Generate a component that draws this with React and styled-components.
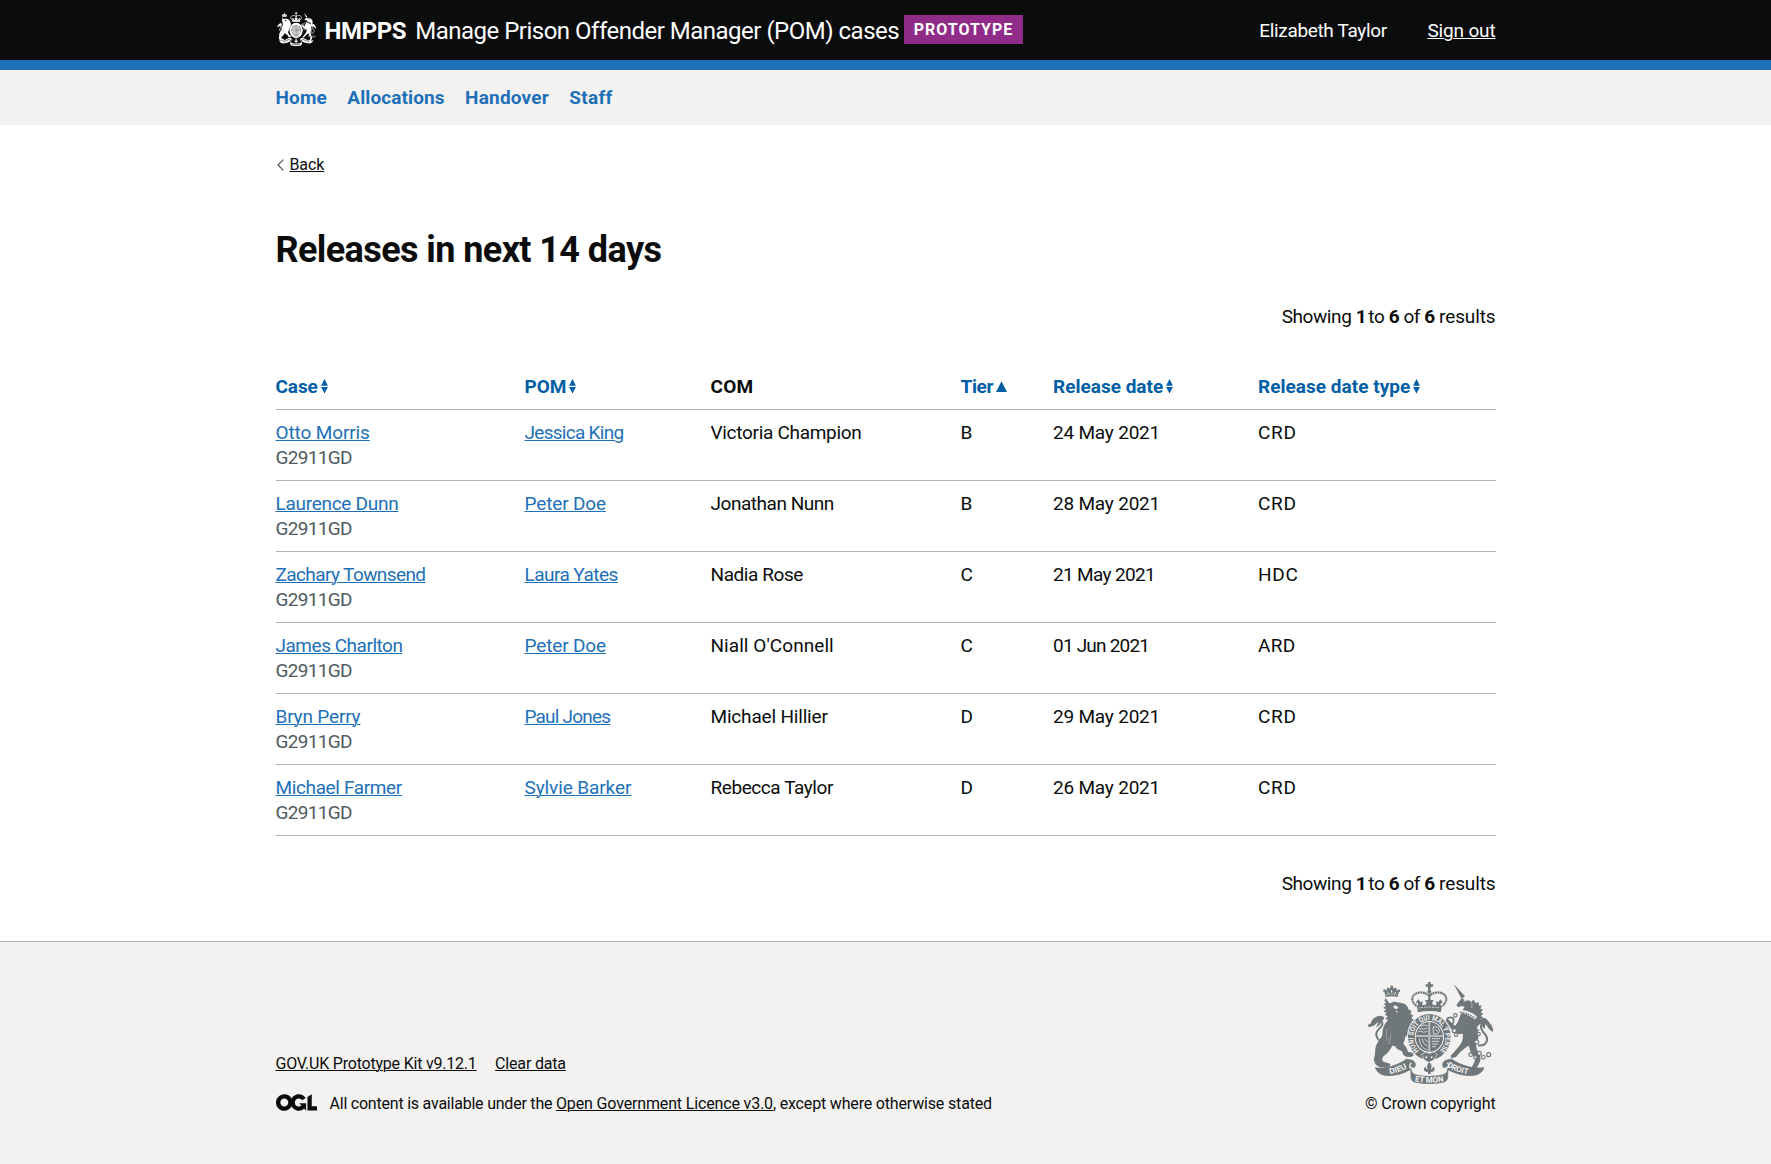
import React from "react";
import styled, { createGlobalStyle } from "styled-components";

const INK = "#0b0c0c";
const LINK = "#1d70b8";
const SORT = "#005ea5";
const PALE = "#f3f2f1";
const RULE = "#b1b4b6";

const GlobalStyle = createGlobalStyle`
  *, *::before, *::after { box-sizing: border-box; }
  body {
    margin: 0;
    background: #fff;
    color: ${INK};
    font-family: Roboto, "Liberation Sans", Arial, sans-serif;
    font-size: 19px;
    line-height: 25px;
  }
`;

const Container = styled.div`
  width: 1220px;
  margin: 0 auto;
`;

const Tracked = styled.span`
  letter-spacing: ${(p) => p.$t || 0}px;
  white-space: nowrap;
`;

const Anchor = styled.a`
  color: ${(p) => p.$color || LINK};
  letter-spacing: ${(p) => p.$t || 0}px;
  text-decoration: underline;
  text-decoration-thickness: 1px;
  text-underline-offset: ${(p) => p.$offset || 1}px;
  white-space: nowrap;
  cursor: pointer;
`;

/* Header */

const Header = styled.header`
  height: 70px;
  background: ${INK};
  border-bottom: 10px solid ${LINK};
  color: #fff;
`;

const HeaderRow = styled(Container)`
  display: flex;
  justify-content: space-between;
  align-items: flex-start;
`;

const Brand = styled.div`
  display: flex;
  align-items: flex-start;
  padding-left: 1.5px;
`;

const BrandCrest = styled.div`
  height: 34px;
  margin: 12px 8.5px 0 0;
  svg { display: block; }
`;

const Organisation = styled.span`
  margin: 16px 9px 0 0;
  font-size: 24px;
  font-weight: 700;
  line-height: 30px;
  letter-spacing: -0.4px;
`;

const Product = styled.span`
  margin-top: 16px;
  font-size: 24px;
  line-height: 30px;
  letter-spacing: -0.5px;
  white-space: nowrap;
`;

const Tag = styled.strong`
  height: 29px;
  margin: 15px 0 0 4.5px;
  padding: 5px 10px 0 10px;
  background: #912b88;
  font-size: 16px;
  line-height: 19px;
  letter-spacing: 1px;
`;

const Account = styled.div`
  display: flex;
  gap: 40.5px;
  padding-top: 18px;
`;

/* Navigation */

const Nav = styled.nav`
  background: ${PALE};
`;

const NavList = styled(Container)`
  display: flex;
  gap: 20.4px;
  padding: 15px 0;
`;

const NavLink = styled.a`
  color: ${LINK};
  font-weight: 700;
  letter-spacing: ${(p) => p.$t}px;
`;

/* Main content */

const Main = styled(Container)`
  padding: 30px 0 45px;
`;

const BackLink = styled.div`
  display: flex;
  align-items: center;
  gap: 6px;
  height: 20px;
  padding-left: 1px;
  font-size: 16px;
  line-height: 20px;
`;

const Title = styled.h1`
  margin: 55px 0 34px;
  font-size: 36px;
  font-weight: 700;
  line-height: 40px;
  letter-spacing: -0.59px;
`;

const Results = styled.p`
  margin: 0;
  text-align: right;
  letter-spacing: -0.42px;
`;

const Narrow = styled.b`
  letter-spacing: -2.6px;
`;

const Table = styled.table`
  width: 1220px;
  margin: 35px 0;
  table-layout: fixed;
  border-collapse: separate;
  border-spacing: 0;
`;

const Col = styled.col`
  width: ${(p) => p.$w}px;
`;

const Th = styled.th`
  height: 46px;
  padding: 10px 0;
  border-bottom: 1px solid ${RULE};
  color: ${(p) => (p.$sortable ? SORT : INK)};
  text-align: left;
  vertical-align: top;
  white-space: nowrap;
`;

const HeadCell = styled.div`
  display: flex;
  align-items: flex-start;
  letter-spacing: ${(p) => p.$t || 0}px;
`;

const Td = styled.td`
  height: 71px;
  padding: 10px 0;
  border-bottom: 1px solid ${RULE};
  vertical-align: top;
`;

const CaseNumber = styled.div`
  color: #505a5f;
  letter-spacing: -0.7px;
`;

const SortIcon = styled.svg`
  display: block;
  margin: 5px 0 0 3px;
  fill: currentColor;
`;

/* Footer */

const Footer = styled.footer`
  padding: 40px 0 50px;
  border-top: 1px solid ${RULE};
  background: ${PALE};
  font-size: 16px;
  line-height: 20px;
`;

const FooterRow = styled(Container)`
  display: flex;
  justify-content: space-between;
  align-items: flex-end;
`;

const FooterLinks = styled.div`
  display: flex;
  gap: 18.5px;
  margin-bottom: 20px;
`;

const Licence = styled.div`
  display: flex;
  align-items: flex-start;
  height: 20px;
  svg { display: block; margin-right: 13px; }
`;

const Copyright = styled.div`
  display: flex;
  flex-direction: column;
  align-items: center;
  gap: 10px;
  svg { display: block; }
`;

function Crest({ width, height, ink, ground, detailed }) {
  return (
    <svg width={width} height={height} viewBox="54 36 375 306" preserveAspectRatio="none" fill={ink} aria-hidden="true">
      {/* crown */}
      <path d="M234 36h8v7h7v7h-7v9h-8v-9h-7v-7h7z" />
      <circle cx="238" cy="65" r="6" />
      <g fill="none" stroke={ink} strokeWidth="6.5" strokeDasharray={detailed ? "6 1.4" : undefined}>
        <path d="M200 108C180 94 184 72 206 68c14-2 26 2 32 12 6-10 18-14 32-12 22 4 26 26 6 40" />
        <path d="M238 72v18" />
      </g>
      <path d="M205 88l6 8 8-2-3 9 5 7h-19l3-8-7-5zM238 82l5 8 9 1-6 7 6 12h-28l6-12-6-7 9-1zM271 88l-6 8-8-2 3 9-5 7h19l-3-8 7-5z" />
      <path d="M200 108q38-8 76 0l-4 19q-34-8-68 0z" />
      <path d="M206 114q32-6 64 0" fill="none" stroke={ground} strokeWidth="2.5" strokeDasharray="5 3" />

      {/* lion */}
      <path d="M107 84l-4 9 6 4-8 5 7 5-9 7 9 3-7 9 9 1-5 9 8 2-6 9 7 3c-12 12-18 28-17 45-4 12-14 20-19 32-4 10-1 20-4 30-4 12-2 24 8 30l9 5 14-1 12-1 5-8-9-3-12-4c-8-6-4-14 4-20 10-8 17-18 22-28l9 2c2 8 12 12 20 14 1 8 6 16 13 17l12 1 10-4-3-9-13-2c-4-8-7-18-15-24 4-10 6-18 7-26l12 10 9 9 9-4 2-10-9-3-10-14 8 3-6-10 9 0-8-10 9-3-8-8 9-6-9-5 6-9-9-4 4-9-10-5c-1-10-10-18-21-19-12-6-28-4-36 1z" />
      <g fill={ground}>
        <path d="M114 94l10-3 6 4-8 3zM137 94l9-4 6 5-8 3zM130 108l6-2 10 7-8 5-6-4zM137 122l6 1-2 6z" />
      </g>
      <path d="M107 81l-4-17 9-4 5-3 8-6 8 6 5 3 9 4-4 17q-18-5-36 0z" />
      <g>
        <circle cx="104" cy="62" r="4.5" /><circle cx="114" cy="57" r="4" /><circle cx="125" cy="51" r="4.5" /><circle cx="136" cy="57" r="4" /><circle cx="146" cy="62" r="4.5" />
        <path d="M108 75q17-5 34 0" fill="none" stroke={ground} strokeWidth="2.2" strokeDasharray="5 3" />
        <path d="M112 66l5 5M138 66l-5 5M125 60v8" fill="none" stroke={ground} strokeWidth="3" />
      </g>
      <path d="M100 218C80 210 72 192 86 178c12-10 16-20 4-28" fill="none" stroke={ink} strokeWidth="6" />
      <path d="M104 144c-6-8-18-8-26-3-10 5-14 12-15 19l-9 4 2 8c12-2 20-6 24-12l6-4-8 16c8-4 14-8 15-15z" />
      <path d="M110 176q-4 22 4 38M122 190q2 18-6 32" fill="none" stroke={ground} strokeWidth="1" />

      {/* unicorn */}
      <path d="M311 42l34 37-10 8z" />
      <path d="M336 85c-6 4-8 10-14 16-4 5-2 9 4 10l10-3 8 3c-8 10-12 22-16 34-4 10-8 18-12 22-10-6-14-12-20-18l-10 2-4 8 8 2 14 16 10 12c8 4 16 4 24 2 2 16-2 26-8 34l-18 22-10 10 2 8 14-4c10-14 24-26 38-34 4 10 4 22 14 30 8 10 4 18 0 26l-8 14-16 6-2 7 24-2 14-18c8-12 12-22 8-32-6-12-10-18-12-32 6-14 10-24 4-36-2-12-2-20 6-30l8-6-6-4 10-8-8-3 8-9-8-2 7-10-8-1 4-11-8 1-1-11-9 4-6-11-7 6c-4-4-10-4-16-2z" />
      <path d="M328 129c16 0 32 8 48 20l5-9c-12-12-30-19-48-20z" fill={ground} />
      <path d="M330 127c16 0 32 8 47 18" fill="none" stroke={ink} strokeWidth="4.5" strokeDasharray="5 3" />
      <circle cx="343" cy="93" r="2.4" fill={ground} />
      <path d="M362 94q7 9 3 20" fill="none" stroke={ground} strokeWidth="1.5" />
      <path d="M384 226c24 4 34-16 22-32-12-14-18-24-8-36" fill="none" stroke={ink} strokeWidth="6" />
      <path d="M384 168c0-12 6-22 18-24 10 2 12 10 20 18 4 6 8 12 7 24-8-4-14-10-18-18l-4-6-4 14c-6-2-8-10-7-16-6 2-8 4-12 8z" />
      <path d="M298 160c-10-6-10-18 4-18 12 0 10 12 6 20M386 178l-10 12 2 14" fill="none" stroke={ink} strokeWidth="5" />
      <g fill={ground} stroke={ink} strokeWidth="3.4">
        <circle cx="316" cy="136" r="5" /><circle cx="313" cy="182" r="6" /><circle cx="318" cy="194" r="5" />
        <circle cx="386" cy="192" r="5" /><circle cx="380" cy="216" r="6" /><circle cx="362" cy="254" r="5.5" />
        <circle cx="376" cy="262" r="5" /><circle cx="388" cy="250" r="6" /><circle cx="400" cy="262" r="5.5" /><circle cx="416" cy="254" r="6" />
      </g>

      {/* garter and shield */}
      <ellipse cx="238" cy="201" rx="67" ry="72" fill={ground} />
      <ellipse cx="238" cy="201" rx="64" ry="69" />
      <ellipse cx="238" cy="201" rx="44" ry="48" fill={ground} />
      <ellipse cx="238" cy="201" rx="41" ry="45" />
      <path d="M238 157v88M198 198h80" stroke={ground} strokeWidth="5" />
      <g fill="none" stroke={ground} strokeWidth="2.4">
        <path d="M206 178l8-4 6 4 12-4M204 186l8-3 8 4 12-3M212 168l10-3 10 2" />
        <path d="M250 170l14 2 5 12-8 8h-10l-2-12zM254 178l10 6" />
        <path d="M208 206c2 18 8 28 24 34M216 206q2 16 16 22M224 206l8 10" />
        <path d="M246 206l24 0M246 214l22 0M246 222l18 0M246 230l12 0" />
      </g>
      <path d="M238 157v88M198 198h80" stroke={ink} strokeWidth="1.5" />
      <path id="garter" d="M207 242A48 52 0 1 1 269 242" fill="none" />
      {detailed && (
        <text fill={ground} fontSize="22" fontWeight="700" fontFamily="Roboto, sans-serif">
          <textPath href="#garter" textLength="246" lengthAdjust="spacingAndGlyphs">HONI SOIT QUI MAL Y PENSE</textPath>
        </text>
      )}
      <path d="M214 254l14-8 10 5 14-6 10 8-12 18-14 6-12-6z" stroke={ground} strokeWidth="2" />
      <g fill={ground}><circle cx="229" cy="262" r="3" /><circle cx="245" cy="262" r="3" /></g>

      {/* fleur-de-lis above the centre of the motto */}
      <path d="M238 276c8 8 8 16 4 22 4 0 7-3 6-8 8 2 8 12 0 15l-6 1v6h-8v-6l-6-1c-8-3-8-13 0-15-1 5 2 8 6 8-4-6-4-14 4-22z" />

      {/* motto scroll */}
      <g stroke={ink} strokeWidth="2">
        <path d="M76 293c32 4 66-6 94-26l17 4c10 6 12 14 6 22l-14-4c-4 0-2 6 2 10-28 16-62 22-84 15-10-4-18-12-21-21z" />
        <path d="M402 293c-34 4-68-6-98-26l-17 4c-10 6-12 14-6 22l14-4c4 0 2 6-2 10 30 16 66 22 88 15 10-4 18-12 21-21z" />
        <path d="M182 290c0 12 4 20 14 24q42 10 84 0c10-4 14-12 14-24l-1 33c-1 8-6 12-13 14q-42 9-84 0c-8-2-12-6-13-14z" />
      </g>
      <path d="M184 278c-6 6-6 12 0 16M292 278c6 6 6 12 0 16" fill="none" stroke={ground} strokeWidth="4" />
      {!detailed && (
        <g fill="none" stroke={ground} strokeWidth="5">
          <path d="M112 302q36-4 62-22M302 280q30 18 60 22M200 326q38 7 76 0" />
        </g>
      )}
      <path id="dieu" d="M119 312q34-4 62-25" fill="none" />
      <path id="droit" d="M290 289q32 21 72 25" fill="none" />
      <path id="etmon" d="M194 334q44 8 90 0" fill="none" />
      {detailed && (
        <g fill={ground} fontSize="24" fontWeight="700" fontFamily="Roboto, sans-serif">
          <text><textPath href="#dieu" textLength="56" lengthAdjust="spacingAndGlyphs">DIEU</textPath></text>
          <text><textPath href="#etmon" textLength="88" lengthAdjust="spacingAndGlyphs">ET MON</textPath></text>
          <text><textPath href="#droit" textLength="68" lengthAdjust="spacingAndGlyphs">DROIT</textPath></text>
        </g>
      )}
    </svg>
  );
}

function OglLogo() {
  return (
    <svg width="41" height="17" viewBox="0 0 483.2 195.7" fill={INK} aria-hidden="true">
      <path d="M421.5 142.8V.1l-50.7 32.3v161.1h112.4v-50.7zm-122.3-9.6A47.12 47.12 0 0 1 221 97.8c0-26 21.1-47.1 47.1-47.1 16.7 0 31.4 8.7 39.7 21.8l42.7-27.2A97.63 97.63 0 0 0 268.1 0c-36.5 0-68.3 20.1-85.1 49.7A98 98 0 0 0 97.8 0C43.9 0 0 43.9 0 97.8s43.9 97.8 97.8 97.8c36.5 0 68.3-20.1 85.1-49.7a97.76 97.76 0 0 0 149.6 25.4l19.4 22.2h3v-87.8h-80l24.3 27.5zM97.8 145c-26 0-47.1-21.1-47.1-47.1s21.1-47.1 47.1-47.1 47.1 21.1 47.1 47.1S123.8 145 97.8 145" />
    </svg>
  );
}

function SortArrow({ kind }) {
  if (kind === "ascending") {
    return (
      <SortIcon width="11" height="14" viewBox="0 0 11 14">
        <path d="M5.5 2.2L11 13H0z" />
      </SortIcon>
    );
  }
  return (
    <SortIcon width="7" height="15" viewBox="0 0 7 15">
      <path d="M3.5 0L6.9 6.7H.1zM3.5 14.6L.1 7.9h6.8z" />
    </SortIcon>
  );
}

const columns = [
  { label: "Case", width: 249, sort: "both", t: -0.1 },
  { label: "POM", width: 186, sort: "both", t: 0 },
  { label: "COM", width: 250, t: 0.2 },
  { label: "Tier", width: 92.5, sort: "ascending", t: -0.35 },
  { label: "Release date", width: 205, sort: "both", t: 0 },
  { label: "Release date type", width: 237.5, sort: "both", t: 0.03 },
];

const rows = [
  [["Otto Morris", -0.12], ["Jessica King", -0.71], ["Victoria Champion", -0.3], "B", ["24 May 2021", -0.2], ["CRD", 0.7]],
  [["Laurence Dunn", -0.28], ["Peter Doe", -0.15], ["Jonathan Nunn", -0.46], "B", ["28 May 2021", -0.2], ["CRD", 0.7]],
  [["Zachary Townsend", -0.6], ["Laura Yates", -0.55], ["Nadia Rose", -0.42], "C", ["21 May 2021", -0.65], ["HDC", 0.7]],
  [["James Charlton", -0.48], ["Peter Doe", -0.15], ["Niall O'Connell", 0.06], "C", ["01 Jun 2021", -0.8], ["ARD", 0.3]],
  [["Bryn Perry", -0.17], ["Paul Jones", -0.8], ["Michael Hillier", -0.18], "D", ["29 May 2021", -0.2], ["CRD", 0.7]],
  [["Michael Farmer", -0.37], ["Sylvie Barker", -0.1], ["Rebecca Taylor", -0.43], "D", ["26 May 2021", -0.2], ["CRD", 0.7]],
];

function ResultCount() {
  return (
    <Results>
      Showing <Narrow>1</Narrow> to <b>6</b> of <b>6</b> <Tracked $t={-0.12}>results</Tracked>
    </Results>
  );
}

export default function App() {
  return (
    <>
      <GlobalStyle />
      <Header>
        <HeaderRow>
          <Brand>
            <BrandCrest>
              <Crest width={39} height={34} ink="#fff" ground={INK} />
            </BrandCrest>
            <Organisation>HMPPS</Organisation>
            <Product>Manage Prison Offender Manager (POM) cases</Product>
            <Tag>PROTOTYPE</Tag>
          </Brand>
          <Account>
            <Tracked $t={-0.33}>Elizabeth Taylor</Tracked>
            <Anchor $color="#fff" $t={-0.15}>Sign out</Anchor>
          </Account>
        </HeaderRow>
      </Header>
      <Nav>
        <NavList>
          <NavLink $t={0.15}>Home</NavLink>
          <NavLink $t={0.1}>Allocations</NavLink>
          <NavLink $t={0.2}>Handover</NavLink>
          <NavLink $t={0.3}>Staff</NavLink>
        </NavList>
      </Nav>
      <Main as="main">
        <BackLink>
          <svg width="7" height="12" viewBox="0 0 7 12" fill="none" stroke="#505a5f" strokeWidth="1.2">
            <path d="M6.3.7L1 6l5.3 5.3" />
          </svg>
          <Anchor $color={INK} $t={-0.1}>Back</Anchor>
        </BackLink>
        <Title>Releases in next 14 days</Title>
        <ResultCount />
        <Table>
          <colgroup>
            {columns.map((c) => <Col key={c.label} $w={c.width} />)}
          </colgroup>
          <thead>
            <tr>
              {columns.map((c) => (
                <Th key={c.label} $sortable={!!c.sort}>
                  <HeadCell $t={c.t}>
                    {c.label}
                    {c.sort && <SortArrow kind={c.sort} />}
                  </HeadCell>
                </Th>
              ))}
            </tr>
          </thead>
          <tbody>
            {rows.map(([person, pom, com, tier, date, type]) => (
              <tr key={person[0]}>
                <Td>
                  <Anchor $t={person[1]}>{person[0]}</Anchor>
                  <CaseNumber>G2911GD</CaseNumber>
                </Td>
                <Td><Anchor $t={pom[1]}>{pom[0]}</Anchor></Td>
                <Td><Tracked $t={com[1]}>{com[0]}</Tracked></Td>
                <Td>{tier}</Td>
                <Td><Tracked $t={date[1]}>{date[0]}</Tracked></Td>
                <Td><Tracked $t={type[1]}>{type[0]}</Tracked></Td>
              </tr>
            ))}
          </tbody>
        </Table>
        <ResultCount />
      </Main>
      <Footer>
        <FooterRow>
          <div>
            <FooterLinks>
              <Anchor $color={INK} $t={-0.21}>GOV.UK Prototype Kit v9.12.1</Anchor>
              <Anchor $color={INK} $t={-0.18}>Clear data</Anchor>
            </FooterLinks>
            <Licence>
              <OglLogo />
              <span>
                <Tracked $t={-0.22}>All content is available under the </Tracked>
                <Anchor $color={INK} $t={-0.15}>Open Government Licence v3.0</Anchor>
                <Tracked $t={-0.17}>, except where otherwise stated</Tracked>
              </span>
            </Licence>
          </div>
          <Copyright>
            <Crest width={125} height={102} ink="#6f777b" ground={PALE} detailed />
            <Tracked $t={-0.12}>© Crown copyright</Tracked>
          </Copyright>
        </FooterRow>
      </Footer>
    </>
  );
}
